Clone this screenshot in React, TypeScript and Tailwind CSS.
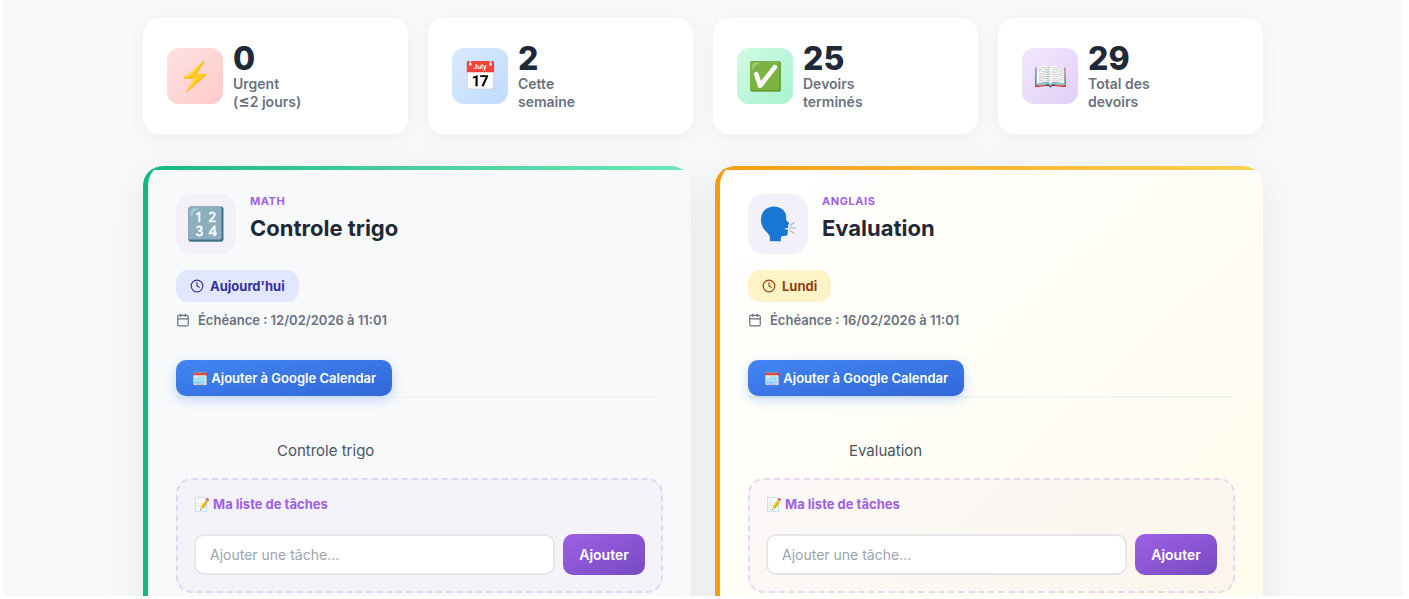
import type { ReactNode } from 'react';

const ClockIcon = () => (
  <svg width="14" height="14" viewBox="0 0 24 24" fill="none" stroke="currentColor" strokeWidth="2" strokeLinecap="round" strokeLinejoin="round">
    <circle cx="12" cy="12" r="10" />
    <polyline points="12 6 12 12 16 14" />
  </svg>
);

const CalendarIcon = () => (
  <svg width="14" height="14" viewBox="0 0 24 24" fill="none" stroke="currentColor" strokeWidth="2" strokeLinecap="round" strokeLinejoin="round">
    <rect x="3" y="4" width="18" height="18" rx="2" />
    <line x1="16" y1="2" x2="16" y2="6" />
    <line x1="8" y1="2" x2="8" y2="6" />
    <line x1="3" y1="10" x2="21" y2="10" />
  </svg>
);

const StatCard = ({ icon, iconBg, value, label }: { icon: string; iconBg: string; value: string; label: ReactNode }) => (
  <div className="flex-1 h-[116px] bg-white rounded-2xl shadow-[0_4px_20px_rgba(0,0,0,0.05)] px-6 flex items-center gap-[10px]">
    <div className={`w-14 h-14 rounded-xl flex items-center justify-center text-[28px] ${iconBg}`}>{icon}</div>
    <div className="pt-[2px]">
      <div className="text-[32px] leading-[32px] font-extrabold text-[#1f2937]">{value}</div>
      <div className="text-sm leading-[18px] font-semibold text-[#6b7280]">{label}</div>
    </div>
  </div>
);

const TaskCard = ({ subject, emoji, title, badge, badgeClass, due, cardClass, barClass, sideClass }: {
  subject: string; emoji: string; title: string; badge: string; badgeClass: string; due: string; cardClass: string; barClass: string; sideClass: string;
}) => (
  <div className={`relative flex-1 h-[500px] rounded-[20px] overflow-hidden border-l-[5px] shadow-[0_10px_40px_rgba(0,0,0,0.08)] px-[28px] pt-[28px] ${cardClass} ${sideClass}`}>
    <div className={`absolute top-0 left-0 right-0 h-1 ${barClass}`}></div>
    <div className="flex gap-[14px]">
      <div className="w-[60px] h-[60px] rounded-2xl bg-[#f3f0fa] flex items-center justify-center text-[32px]">{emoji}</div>
      <div>
        <div className="text-[11px] leading-[14px] font-bold tracking-[0.05em] uppercase text-[#9f60e6]">{subject}</div>
        <div className="text-[22px] leading-[28px] font-bold text-[#1f2937] mt-[6px]">{title}</div>
      </div>
    </div>
    <div className={`inline-flex items-center gap-[6px] h-8 px-[14px] rounded-xl mt-4 text-[13px] font-bold ${badgeClass}`}>
      <ClockIcon />
      <span className="pt-[2px]">{badge}</span>
    </div>
    <div className="flex items-center gap-2 mt-2 text-[13px] leading-[20px] font-semibold text-[#6b7280]">
      <CalendarIcon />
      {due}
    </div>
    <div className="border-b-2 border-[#f3f4f6] mt-[30px] h-[38px]">
      <div className="inline-flex items-center h-9 px-4 pt-[2px] rounded-[10px] text-white text-[13px] font-semibold bg-gradient-to-br from-[#4285f4] to-[#3367d6] shadow-[0_4px_12px_rgba(66,133,244,0.3)]">
        🗓️ Ajouter à Google Calendar
      </div>
    </div>
    <div className="mt-[42px] pl-[101px] text-[15px] leading-[22px] text-[#4b5563]">{title}</div>
    <div className="mt-4 rounded-2xl border-2 border-dashed border-[#9f60e6]/20 bg-[#9f60e6]/[0.04] px-4 pt-[14px] pb-4">
      <div className="text-[13px] leading-[20px] font-bold text-[#9f60e6]">📝 Ma liste de tâches</div>
      <div className="flex gap-2 mt-5">
        <div className="flex-1 h-[41px] rounded-[10px] bg-white border-2 border-[#e5e7eb] px-[14px] flex items-center text-sm text-[#9ca3af]">Ajouter une tâche...</div>
        <div className="w-[82px] h-[41px] rounded-[10px] flex items-center justify-center text-sm font-semibold text-white bg-gradient-to-br from-[#9f60e6] to-[#764bc0]">Ajouter</div>
      </div>
    </div>
  </div>
);

export default function App() {
  return (
    <div className="h-[599px] overflow-hidden bg-white pl-[3px] pr-[6px] pb-[3px] font-['Inter',sans-serif]">
      <div className="h-full overflow-hidden bg-[#f8f9fb] pt-[18px]">
        <div className="w-[1120px] ml-[140px]">
          <div className="flex gap-5">
            <StatCard icon="⚡" iconBg="bg-gradient-to-br from-[#fee2e2] to-[#fecaca]" value="0" label={<>Urgent<br />(<span className="text-[17px] leading-[10px]">≤</span>2 jours)</>} />
            <StatCard icon="📅" iconBg="bg-gradient-to-br from-[#dbeafe] to-[#bfdbfe]" value="2" label={<>Cette<br />semaine</>} />
            <StatCard icon="✅" iconBg="bg-gradient-to-br from-[#d1fae5] to-[#a7f3d0]" value="25" label={<>Devoirs<br />terminés</>} />
            <StatCard icon="📖" iconBg="bg-gradient-to-br from-[#f3e8ff] to-[#e0cff5]" value="29" label={<>Total des<br />devoirs</>} />
          </div>
          <div className="flex gap-6 mt-8">
            <TaskCard subject="Math" emoji="🔢" title="Controle trigo" badge="Aujourd'hui" badgeClass="bg-[#e0e7ff] text-[#3730a3]" due="Échéance : 12/02/2026 à 11:01" cardClass="bg-[#f8f9fb]" barClass="bg-gradient-to-r from-[#10b981] to-[#6ee7b7]" sideClass="border-[#10b981]" />
            <TaskCard subject="Anglais" emoji="🗣️" title="Evaluation" badge="Lundi" badgeClass="bg-[#fef3c7] text-[#92400e]" due="Échéance : 16/02/2026 à 11:01" cardClass="bg-gradient-to-br from-white to-[#fffbeb]" barClass="bg-gradient-to-r from-[#f59e0b] to-[#fcd34d]" sideClass="border-[#f59e0b]" />
          </div>
        </div>
      </div>
    </div>
  );
}
